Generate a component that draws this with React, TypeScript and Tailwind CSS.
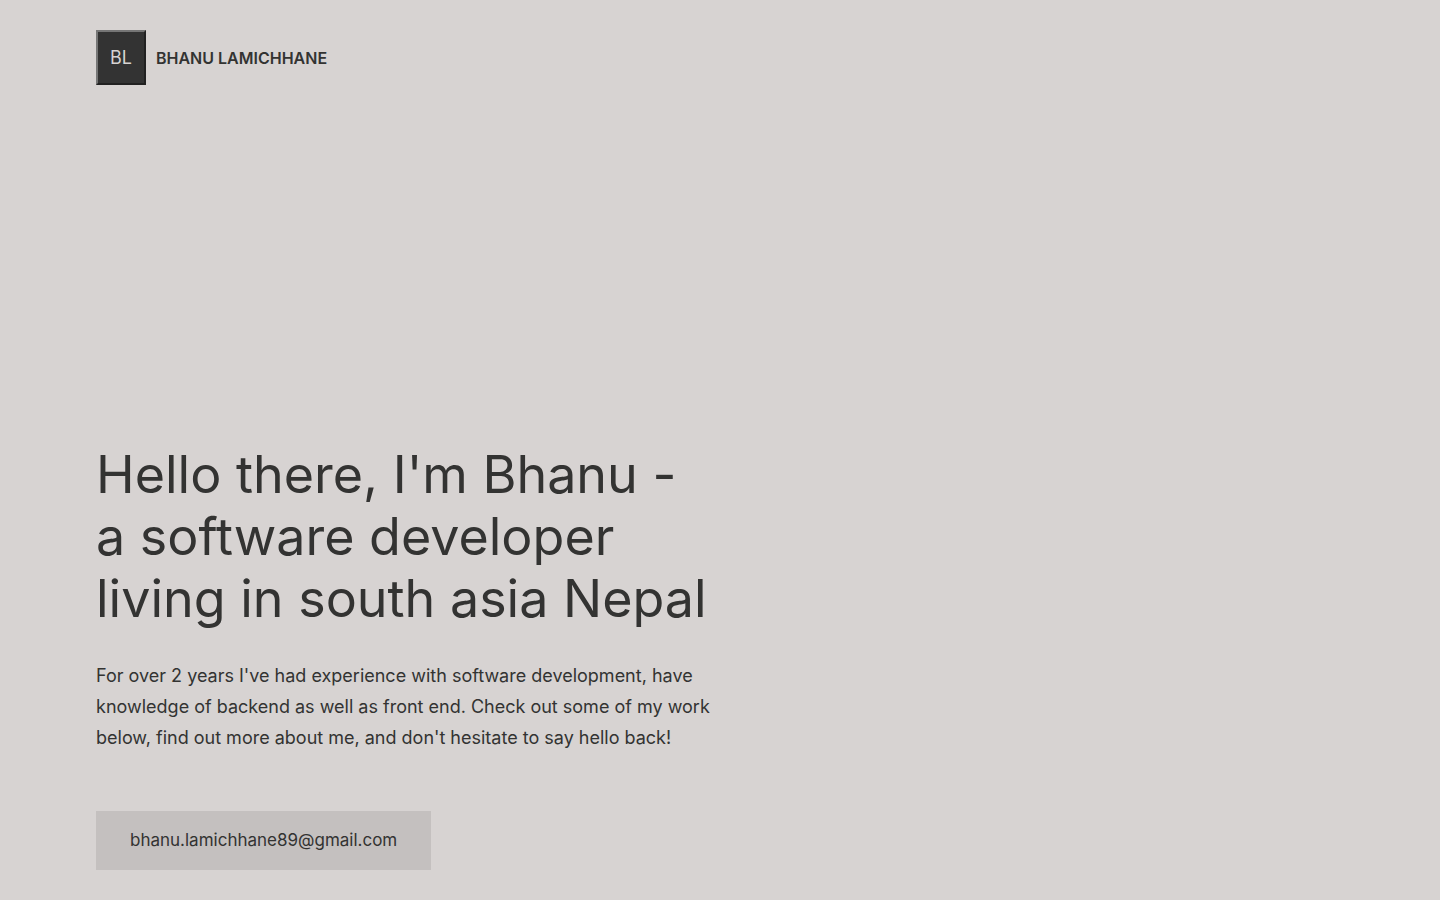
export default function App() {
  return (
    <div className="flex min-h-screen flex-col justify-between bg-[#d7d3d2] px-24 py-[30px] font-['Inter',sans-serif] text-[#333332]">
      <header>
        <div className="flex items-center gap-[10px]">
          <button
            type="button"
            className="h-[55px] w-[50px] border-2 border-t-[#767676] border-r-[#212121] border-b-[#212121] border-l-[#767676] bg-[#333333] text-lg text-[#d7d3d2]"
          >
            BL
          </button>
          <span className="text-base font-semibold">BHANU LAMICHHANE</span>
        </div>
      </header>
      <main className="flex flex-col items-start">
        <h1 className="text-[52px] leading-[62px] font-normal">
          Hello there, I'm Bhanu -<br />
          a software developer<br />
          living in south asia Nepal
        </h1>
        <p className="mt-[30px] max-w-[624px] text-lg leading-[31px]">
          For over 2 years I've had experience with software development, have
          knowledge of backend as well as front end. Check out some of my work
          below, find out more about me, and don't hesitate to say hello back!
        </p>
        <a
          href="mailto:bhanu.lamichhane89@gmail.com"
          className="mt-[58px] bg-[#c4c0bf] px-[34px] py-4 text-[17px] leading-[27px]"
        >
          bhanu.lamichhane89@gmail.com
        </a>
      </main>
    </div>
  );
}
